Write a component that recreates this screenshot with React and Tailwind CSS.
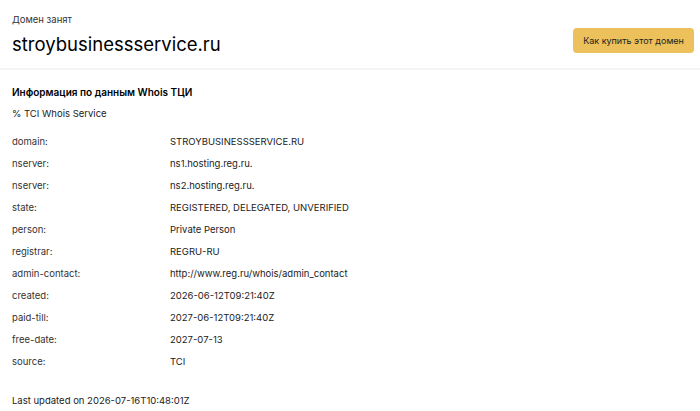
import React from 'react';

const ROWS = [
  ['domain:', 'STROYBUSINESSSERVICE.RU'],
  ['nserver:', 'ns1.hosting.reg.ru.'],
  ['nserver:', 'ns2.hosting.reg.ru.'],
  ['state:', 'REGISTERED, DELEGATED, UNVERIFIED'],
  ['person:', 'Private Person'],
  ['registrar:', 'REGRU-RU'],
  ['admin-contact:', 'http://www.reg.ru/whois/admin_contact'],
  ['created:', '2026-06-12T09:21:40Z'],
  ['paid-till:', '2027-06-12T09:21:40Z'],
  ['free-date:', '2027-07-13'],
  ['source:', 'TCI'],
];

export default function App() {
  return (
    <div className="min-h-[411px] bg-white text-[#222] font-['Inter',sans-serif]">
      <header className="flex items-start justify-between pl-3 pr-[6px] pt-[13px] pb-[12px] border-b-2 border-[#f3f5f5]">
        <div>
          <div className="text-[9.5px] leading-[14px] text-[#333]">Домен занят</div>
          <h1 className="mt-[5px] text-[18.5px] leading-[24px] text-black">stroybusinessservice.ru</h1>
        </div>
        <button className="mt-[15px] h-[25px] w-[121px] rounded-[4px] bg-[#ecc05a] text-[9px] text-[#222]">
          Как купить этот домен
        </button>
      </header>

      <section className="px-3 pt-[15px]">
        <h2 className="text-[10px] leading-[14px] font-semibold text-black">Информация по данным Whois ТЦИ</h2>
        <p className="mt-[8px] text-[9.5px] leading-[14px]">% TCI Whois Service</p>

        <div className="mt-[14px] flex flex-col gap-[8px]">
          {ROWS.map(([k, v], i) => (
            <div key={i} className="flex text-[9.5px] leading-[14px]">
              <span className="w-[158px] text-[#333]">{k}</span>
              <span>{v}</span>
            </div>
          ))}
        </div>

        <p className="mt-[25px] text-[9.5px] leading-[14px]">Last updated on 2026-07-16T10:48:01Z</p>
      </section>
    </div>
  );
}
